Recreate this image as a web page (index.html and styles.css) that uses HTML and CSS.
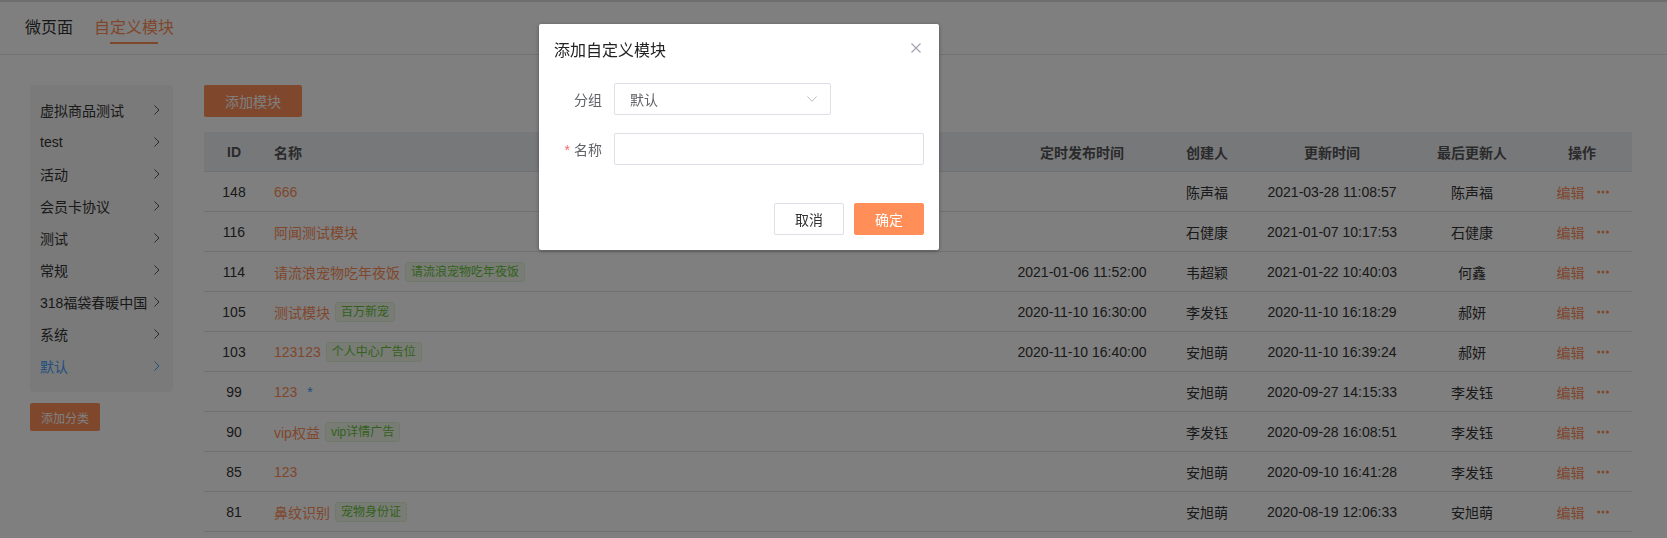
FILE: index.html
```html
<!DOCTYPE html>
<html lang="zh-CN">
<head>
<meta charset="utf-8">
<title>自定义模块</title>
<link rel="stylesheet" href="styles.css">
</head>
<body>
<div class="page">
  <header class="topbar">
    <div class="tab">微页面</div>
    <div class="tab active">自定义模块<span class="tab-line"></span></div>
  </header>
  <div class="main">
    <aside class="side">
      <ul class="groups">
        <li class="group"><span>虚拟商品测试</span><svg class="chev" viewBox="0 0 6 10"><polyline points="0.5,0.5 5,5 0.5,9.5"/></svg></li>
        <li class="group"><span>test</span><svg class="chev" viewBox="0 0 6 10"><polyline points="0.5,0.5 5,5 0.5,9.5"/></svg></li>
        <li class="group"><span>活动</span><svg class="chev" viewBox="0 0 6 10"><polyline points="0.5,0.5 5,5 0.5,9.5"/></svg></li>
        <li class="group"><span>会员卡协议</span><svg class="chev" viewBox="0 0 6 10"><polyline points="0.5,0.5 5,5 0.5,9.5"/></svg></li>
        <li class="group"><span>测试</span><svg class="chev" viewBox="0 0 6 10"><polyline points="0.5,0.5 5,5 0.5,9.5"/></svg></li>
        <li class="group"><span>常规</span><svg class="chev" viewBox="0 0 6 10"><polyline points="0.5,0.5 5,5 0.5,9.5"/></svg></li>
        <li class="group"><span>318福袋春暖中国</span><svg class="chev" viewBox="0 0 6 10"><polyline points="0.5,0.5 5,5 0.5,9.5"/></svg></li>
        <li class="group"><span>系统</span><svg class="chev" viewBox="0 0 6 10"><polyline points="0.5,0.5 5,5 0.5,9.5"/></svg></li>
        <li class="group current"><span>默认</span><svg class="chev" viewBox="0 0 6 10"><polyline points="0.5,0.5 5,5 0.5,9.5"/></svg></li>
      </ul>
      <button class="btn-orange btn-small">添加分类</button>
    </aside>
    <section class="content">
      <button class="btn-orange btn-add">添加模块</button>
      <div class="table">
        <div class="row head">
          <div class="c">ID</div><div class="l">名称</div><div class="c">定时发布时间</div><div class="c">创建人</div><div class="c">更新时间</div><div class="c">最后更新人</div><div class="c">操作</div>
        </div>
        <div class="row">
          <div class="c">148</div><div class="l"><span class="link">666</span></div><div class="c"></div><div class="c">陈声福</div><div class="c">2021-03-28 11:08:57</div><div class="c">陈声福</div>
          <div class="c ops"><span class="link">编辑</span><svg class="dots" viewBox="0 0 12 4"><circle cx="1.6" cy="2" r="1.5"/><circle cx="6" cy="2" r="1.5"/><circle cx="10.4" cy="2" r="1.5"/></svg></div>
        </div>
        <div class="row">
          <div class="c">116</div><div class="l"><span class="link">阿闻测试模块</span></div><div class="c"></div><div class="c">石健康</div><div class="c">2021-01-07 10:17:53</div><div class="c">石健康</div>
          <div class="c ops"><span class="link">编辑</span><svg class="dots" viewBox="0 0 12 4"><circle cx="1.6" cy="2" r="1.5"/><circle cx="6" cy="2" r="1.5"/><circle cx="10.4" cy="2" r="1.5"/></svg></div>
        </div>
        <div class="row">
          <div class="c">114</div><div class="l"><span class="link">请流浪宠物吃年夜饭</span><span class="tag">请流浪宠物吃年夜饭</span></div><div class="c">2021-01-06 11:52:00</div><div class="c">韦超颖</div><div class="c">2021-01-22 10:40:03</div><div class="c">何鑫</div>
          <div class="c ops"><span class="link">编辑</span><svg class="dots" viewBox="0 0 12 4"><circle cx="1.6" cy="2" r="1.5"/><circle cx="6" cy="2" r="1.5"/><circle cx="10.4" cy="2" r="1.5"/></svg></div>
        </div>
        <div class="row">
          <div class="c">105</div><div class="l"><span class="link">测试模块</span><span class="tag">百万新宠</span></div><div class="c">2020-11-10 16:30:00</div><div class="c">李发钰</div><div class="c">2020-11-10 16:18:29</div><div class="c">郝妍</div>
          <div class="c ops"><span class="link">编辑</span><svg class="dots" viewBox="0 0 12 4"><circle cx="1.6" cy="2" r="1.5"/><circle cx="6" cy="2" r="1.5"/><circle cx="10.4" cy="2" r="1.5"/></svg></div>
        </div>
        <div class="row">
          <div class="c">103</div><div class="l"><span class="link">123123</span><span class="tag">个人中心广告位</span></div><div class="c">2020-11-10 16:40:00</div><div class="c">安旭萌</div><div class="c">2020-11-10 16:39:24</div><div class="c">郝妍</div>
          <div class="c ops"><span class="link">编辑</span><svg class="dots" viewBox="0 0 12 4"><circle cx="1.6" cy="2" r="1.5"/><circle cx="6" cy="2" r="1.5"/><circle cx="10.4" cy="2" r="1.5"/></svg></div>
        </div>
        <div class="row">
          <div class="c">99</div><div class="l"><span class="link">123</span><span class="star">*</span></div><div class="c"></div><div class="c">安旭萌</div><div class="c">2020-09-27 14:15:33</div><div class="c">李发钰</div>
          <div class="c ops"><span class="link">编辑</span><svg class="dots" viewBox="0 0 12 4"><circle cx="1.6" cy="2" r="1.5"/><circle cx="6" cy="2" r="1.5"/><circle cx="10.4" cy="2" r="1.5"/></svg></div>
        </div>
        <div class="row">
          <div class="c">90</div><div class="l"><span class="link">vip权益</span><span class="tag">vip详情广告</span></div><div class="c"></div><div class="c">李发钰</div><div class="c">2020-09-28 16:08:51</div><div class="c">李发钰</div>
          <div class="c ops"><span class="link">编辑</span><svg class="dots" viewBox="0 0 12 4"><circle cx="1.6" cy="2" r="1.5"/><circle cx="6" cy="2" r="1.5"/><circle cx="10.4" cy="2" r="1.5"/></svg></div>
        </div>
        <div class="row">
          <div class="c">85</div><div class="l"><span class="link">123</span></div><div class="c"></div><div class="c">安旭萌</div><div class="c">2020-09-10 16:41:28</div><div class="c">李发钰</div>
          <div class="c ops"><span class="link">编辑</span><svg class="dots" viewBox="0 0 12 4"><circle cx="1.6" cy="2" r="1.5"/><circle cx="6" cy="2" r="1.5"/><circle cx="10.4" cy="2" r="1.5"/></svg></div>
        </div>
        <div class="row">
          <div class="c">81</div><div class="l"><span class="link">鼻纹识别</span><span class="tag">宠物身份证</span></div><div class="c"></div><div class="c">安旭萌</div><div class="c">2020-08-19 12:06:33</div><div class="c">安旭萌</div>
          <div class="c ops"><span class="link">编辑</span><svg class="dots" viewBox="0 0 12 4"><circle cx="1.6" cy="2" r="1.5"/><circle cx="6" cy="2" r="1.5"/><circle cx="10.4" cy="2" r="1.5"/></svg></div>
        </div>
      </div>
    </section>
  </div>
</div>

<div class="mask"></div>

<div class="dialog">
  <div class="dialog-head">
    <span class="dialog-title">添加自定义模块</span>
    <svg class="close" viewBox="0 0 10 10"><path d="M0.5 0.5 L9.5 9.5 M9.5 0.5 L0.5 9.5"/></svg>
  </div>
  <div class="dialog-body">
    <div class="field">
      <label class="label">分组</label>
      <div class="select"><span>默认</span><svg class="arrow" viewBox="0 0 10 6"><polyline points="0.5,0.5 5,5.3 9.5,0.5"/></svg></div>
    </div>
    <div class="field">
      <label class="label"><span class="req">*</span>名称</label>
      <div class="input"></div>
    </div>
  </div>
  <div class="dialog-foot">
    <button class="btn btn-plain">取消</button>
    <button class="btn btn-primary">确定</button>
  </div>
</div>
</body>
</html>
```
FILE: styles.css
```css
* { box-sizing: border-box; }
html, body { margin: 0; padding: 0; }
body {
  font-family: "Liberation Sans", "Noto Sans CJK SC", sans-serif;
  font-size: 14px;
  color: #333;
  background: #fff;
  width: 1667px;
  height: 538px;
  overflow: hidden;
}
button { font-family: inherit; cursor: pointer; }

.topbar {
  height: 55px;
  border-top: 2px solid #dcdcdc;
  border-bottom: 1px solid #e6e6e6;
  display: flex;
  gap: 21px;
  padding: 15px 0 0 25px;
}
.tab {
  font-size: 16px;
  line-height: 22px;
  color: #333;
  display: flex;
  flex-direction: column;
  align-items: center;
}
.tab.active { color: #ff8e58; }
.tab-line {
  width: 48px;
  height: 2px;
  margin-top: 3px;
  background: #ff8e58;
}

.main {
  display: flex;
  gap: 31px;
  padding: 30px 35px 0 30px;
}
.side { width: 143px; flex: none; }
.groups {
  list-style: none;
  margin: 0;
  padding: 9px 13px 10px 10px;
  background: #f4f4f4;
  border-radius: 4px;
}
.group {
  height: 32px;
  display: flex;
  align-items: center;
  justify-content: space-between;
  font-size: 14px;
  color: #333;
  white-space: nowrap;
}
.group.current { color: #409eff; }
.chev { width: 6px; height: 10px; flex: none; }
.chev polyline { fill: none; stroke: #555; stroke-width: 1; }
.group.current .chev polyline { stroke: #409eff; }

.btn-orange {
  border: none;
  background: #ff8e58;
  color: #fff;
  border-radius: 2px;
  padding: 0;
}
.btn-small {
  margin-top: 11px;
  width: 70px;
  height: 28px;
  font-size: 12px;
}
.content { flex: 1; display: flex; flex-direction: column; align-items: flex-start; }
.btn-add {
  width: 98px;
  height: 32px;
  font-size: 14px;
}
.table { margin-top: 15px; width: 1428px; }
.row {
  display: grid;
  grid-template-columns: 60px 738px 160px 90px 160px 120px 100px;
  height: 40px;
  border-bottom: 1px solid #e2e3e8;
  align-items: center;
}
.row.head {
  background: #eef0f5;
  font-weight: bold;
  color: #555;
}
.row > div { white-space: nowrap; overflow: hidden; }
.c { text-align: center; }
.l { padding-left: 10px; display: flex; align-items: center; }
.link { color: #ff8e58; }
.tag {
  display: inline-block;
  height: 20px;
  line-height: 18px;
  padding: 0 5px;
  margin-left: 5px;
  font-size: 12px;
  color: #67c23a;
  background: #f0f9eb;
  border: 1px solid #e1f3d8;
  border-radius: 3px;
}
.star { color: #409eff; margin-left: 10px; }
.ops { display: flex; align-items: center; justify-content: center; gap: 12px; padding-left: 1px; }
.dots { width: 12px; height: 4px; }
.dots circle { fill: #ff8e58; }

.mask {
  position: fixed;
  inset: 0;
  background: rgba(0, 0, 0, 0.5);
}

.dialog {
  position: fixed;
  left: 539px;
  top: 24px;
  width: 400px;
  height: 226px;
  background: #fff;
  border-radius: 2px;
  box-shadow: 0 1px 4px rgba(0, 0, 0, 0.35);
  display: flex;
  flex-direction: column;
}
.dialog-head {
  display: flex;
  justify-content: space-between;
  align-items: flex-start;
  padding: 15px 18px 10px 15px;
}
.dialog-title {
  font-size: 16px;
  line-height: 24px;
  color: #222;
}
.close { width: 10px; height: 10px; margin-top: 4px; }
.close path { stroke: #a0a3aa; stroke-width: 1.1; fill: none; }
.dialog-body { padding: 10px 15px 0 15px; display: flex; flex-direction: column; gap: 18px; }
.field { display: flex; align-items: center; }
.label {
  width: 60px;
  padding-right: 12px;
  text-align: right;
  color: #606266;
  font-size: 14px;
}
.req { color: #f56c6c; margin-right: 4px; }
.select {
  width: 217px;
  height: 32px;
  border: 1px solid #dcdfe6;
  border-radius: 2px;
  display: flex;
  align-items: center;
  justify-content: space-between;
  padding: 0 13px 0 15px;
  color: #606266;
}
.arrow { width: 10px; height: 6px; }
.arrow polyline { fill: none; stroke: #b8bcc4; stroke-width: 1; }
.input {
  width: 310px;
  height: 32px;
  border: 1px solid #dcdfe6;
  border-radius: 2px;
}
.dialog-foot {
  margin-top: auto;
  display: flex;
  justify-content: flex-end;
  gap: 10px;
  padding: 0 15px 15px 0;
}
.btn {
  width: 70px;
  height: 32px;
  border-radius: 2px;
  font-size: 14px;
  padding: 0;
}
.btn-plain { background: #fff; border: 1px solid #dcdfe6; color: #333; }
.btn-primary { background: #ff8e58; border: 1px solid #ff8e58; color: #fff; }
```
